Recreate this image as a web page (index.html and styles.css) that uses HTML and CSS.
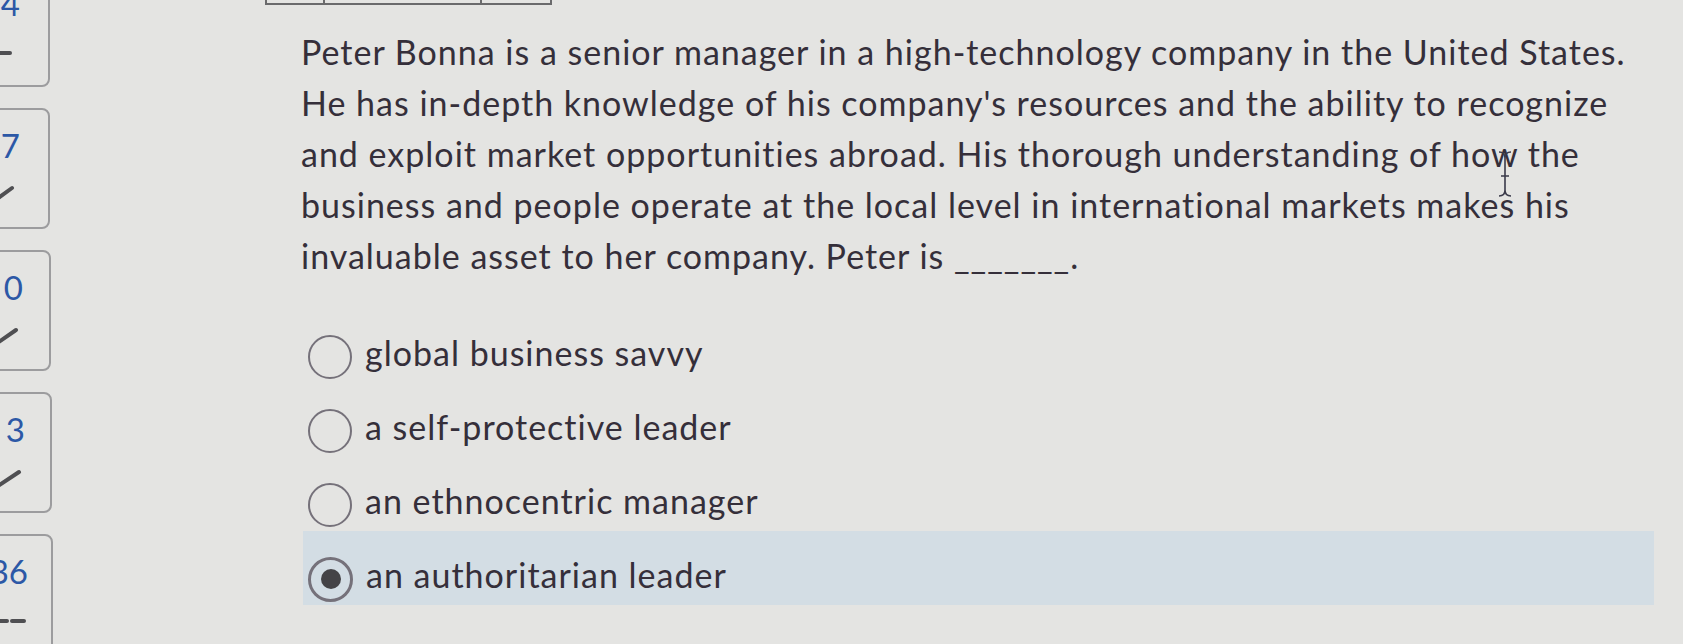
FILE: index.html
```html
<!DOCTYPE html>
<html lang="en">
<head>
<meta charset="utf-8">
<title>Question</title>
<link rel="stylesheet" href="styles.css">
</head>
<body>
<div class="page">
  <aside class="sidebar">
    <div class="card"><span class="num">4</span><svg class="mark" viewBox="0 0 24 20" width="24" height="20"><line x1="0" y1="10" x2="16" y2="10"/></svg></div>
    <div class="card"><span class="num">7</span><svg class="mark" viewBox="0 0 24 20" width="24" height="20"><line x1="-4" y1="19" x2="18" y2="3"/></svg></div>
    <div class="card card-3"><span class="num">0</span><svg class="mark" viewBox="0 0 24 20" width="24" height="20"><line x1="-4" y1="19" x2="19" y2="3"/></svg></div>
    <div class="card card-4"><span class="num">3</span><svg class="mark" viewBox="0 0 24 20" width="24" height="20"><line x1="-4" y1="19" x2="20" y2="3"/></svg></div>
    <div class="card card-5"><span class="num">36</span><svg class="mark" viewBox="0 0 24 20" width="24" height="20"><line x1="-2" y1="10" x2="5" y2="10"/><line x1="10" y1="10" x2="22" y2="10"/></svg></div>
  </aside>
  <main class="main">
    <div class="topbox"><div class="cell c1"></div><div class="cell c2"></div><div class="cell c3"></div></div>
    <p class="question">Peter Bonna is a senior manager in a high-technology company in the United States.<br>He has in-depth knowledge of his company's resources and the ability to recognize<br>and exploit market opportunities abroad. His thorough understanding of how the<br>business and people operate at the local level in international markets makes his<br>invaluable asset to her company. Peter is _______.</p>
    <ul class="options">
      <li class="option"><span class="radio"></span><span class="label">global business savvy</span></li>
      <li class="option"><span class="radio"></span><span class="label">a self-protective leader</span></li>
      <li class="option"><span class="radio"></span><span class="label">an ethnocentric manager</span></li>
      <li class="option selected"><span class="radio"><span class="dot"></span></span><span class="label">an authoritarian leader</span></li>
    </ul>
  </main>
</div>
<svg class="ibeam" width="18" height="48" viewBox="0 0 18 48"><path d="M3 2 Q9 2 9 8 Q9 2 15 2 M9 8 V40 M3 46 Q9 46 9 40 Q9 46 15 46 M5 26 H13"/></svg>
</body>
</html>
```
FILE: styles.css
```css
html, body {
  margin: 0;
  padding: 0;
}
body {
  background: #e4e4e2;
  font-family: Lato, "Open Sans", sans-serif;
  color: #352f3a;
  width: 1683px;
  height: 644px;
  overflow: hidden;
  position: relative;
}
.page {
  display: flex;
  align-items: flex-start;
}
.sidebar {
  display: flex;
  flex-direction: column;
  align-items: flex-start;
  gap: 21px;
  margin-top: -34px;
  margin-left: -54px;
  width: 106px;
  flex-shrink: 0;
}
.card {
  height: 101px;
  border: 2px solid #9c9c9e;
  border-radius: 8px;
  display: flex;
  flex-direction: column;
  align-items: flex-end;
  padding: 16px 28px 0 0;
  box-sizing: content-box;
  width: 72px;
  flex-shrink: 0;
}
.card-3 { width: 75px; padding-right: 26px; }
.card-4 { width: 77px; padding-right: 25px; }
.card-5 { width: 80px; padding-right: 23px; }
.num {
  font-size: 33px;
  line-height: 38px;
  color: #2c58a6;
}
.mark {
  margin-top: 21px;
  margin-right: 2px;
  overflow: visible;
}
.mark line {
  stroke: #4f4f52;
  stroke-width: 4;
  stroke-linecap: round;
}
.main {
  margin-left: 249px;
  display: flex;
  flex-direction: column;
  width: 1353px;
}
.topbox {
  display: flex;
  margin-left: -36px;
  margin-top: -25px;
  height: 28px;
  width: 283px;
  border: 2px solid #6a6a6c;
  border-top: none;
}
.cell {
  height: 100%;
}
.c1 { width: 56px; border-right: 2px solid #6a6a6c; }
.c2 { width: 155px; border-right: 2px solid #6a6a6c; }
.c3 { flex: 1; }
.question {
  margin: 21px 0 0 0;
  font-size: 34px;
  letter-spacing: 1px;
  line-height: 51px;
  white-space: nowrap;
}
.options {
  list-style: none;
  margin: 28px 0 0 2px;
  padding: 0;
  display: flex;
  flex-direction: column;
}
.option {
  height: 74px;
  box-sizing: border-box;
  padding: 22px 0 0 5px;
  display: flex;
  align-items: center;
  gap: 13px;
}
.option.selected {
  background: #d3dde4;
}
.radio {
  width: 40px;
  height: 40px;
  border: 2px solid #75717a;
  border-radius: 50%;
  display: flex;
  align-items: center;
  justify-content: center;
  flex-shrink: 0;
}
.selected .radio {
  border-width: 3px;
  width: 39px;
  height: 39px;
}
.dot {
  width: 20px;
  height: 20px;
  border-radius: 50%;
  background: #444346;
}
.label {
  font-size: 34px;
  letter-spacing: 1px;
  line-height: 38px;
  margin-bottom: 8px;
}
.ibeam {
  position: absolute;
  left: 1496px;
  top: 150px;
}
.ibeam path {
  fill: none;
  stroke: #3a3a4a;
  stroke-width: 1.6;
}
```
